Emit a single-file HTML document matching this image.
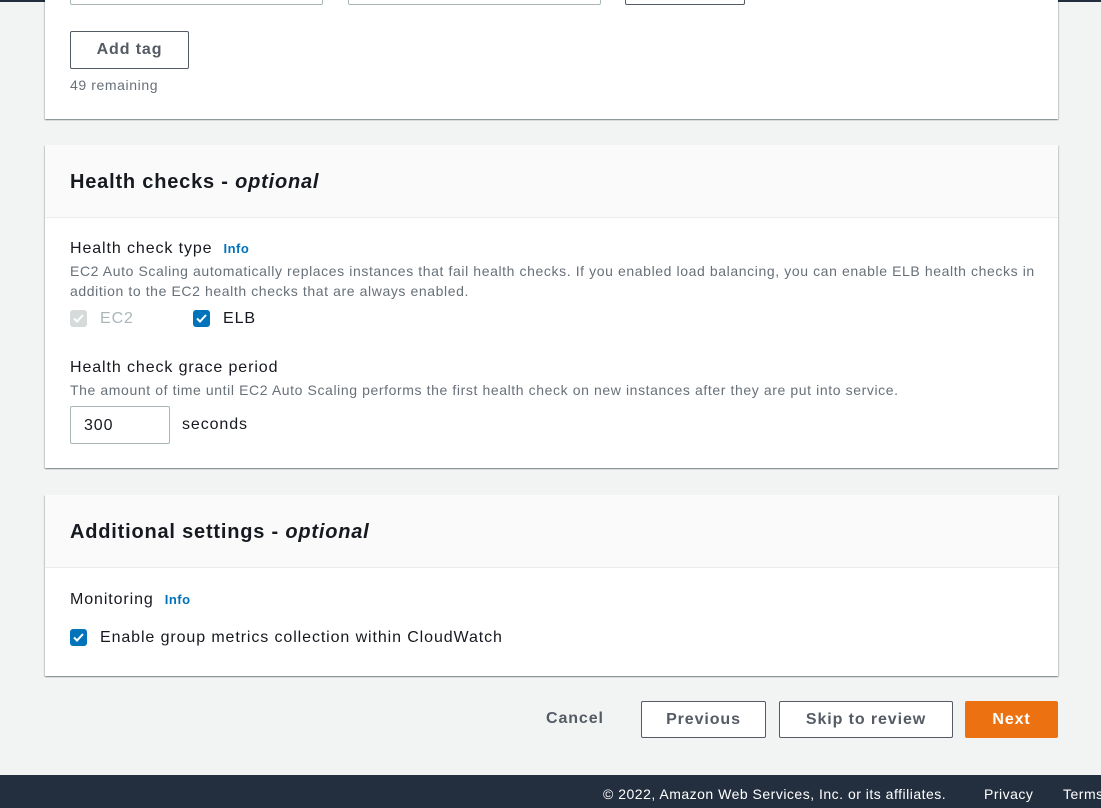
<!DOCTYPE html>
<html><head><meta charset="utf-8"><style>
*{box-sizing:border-box;margin:0;padding:0}
body{width:1101px;height:808px;background:#f2f3f3;font-family:"Liberation Sans",sans-serif;position:relative;overflow:hidden;color:#16191f}
.a{position:absolute;white-space:nowrap}
.card{position:absolute;left:45px;width:1013px;background:#fff;box-shadow:0 1px 1px 0 rgba(0,28,36,.3),1px 1px 1px 0 rgba(0,28,36,.15),-1px 1px 1px 0 rgba(0,28,36,.15)}
.hdr{position:absolute;left:0;top:0;width:100%;height:73px;background:#fafafa;border-bottom:1px solid #eaeded}
.h2{position:absolute;left:25px;font-size:20px;font-weight:bold;letter-spacing:.8px}
.lbl{font-size:16px;letter-spacing:.9px}
.info{color:#0073bb;font-weight:bold;font-size:13px;margin-left:11px;letter-spacing:.5px}
.desc{font-size:14px;color:#687078;line-height:20px;letter-spacing:.6px}
.btn{position:absolute;border:1px solid #545b64;border-radius:2px;background:#fff;color:#545b64;font-weight:bold;font-size:16px;text-align:center;letter-spacing:.9px}
.cb{position:absolute;width:17px;height:17px;border-radius:3px;background:#0073bb}
.cb svg{position:absolute;left:2px;top:2px}
</style></head><body>
<div class="a" style="left:0;top:0;width:1101px;height:2px;background:#232f3e"></div>
<div class="card" style="top:-10px;height:129px">
 <div class="a" style="left:25px;top:0;width:253px;height:15px;border:1px solid #aab7b8;border-top:none;border-radius:0 0 2px 2px"></div>
 <div class="a" style="left:303px;top:0;width:253px;height:15px;border:1px solid #aab7b8;border-top:none;border-radius:0 0 2px 2px"></div>
 <div class="a" style="left:580px;top:0;width:120px;height:15px;border:1px solid #545b64;border-top:none;border-radius:0 0 2px 2px"></div>
 <div class="btn" style="left:25px;top:41px;width:119px;height:38px;line-height:36px;color:#545b64">Add tag</div>
 <div class="a desc" style="left:25px;top:85px">49 remaining</div>
</div>
<div class="card" style="top:145px;height:323px">
 <div class="hdr"></div>
 <div class="h2" style="top:26px">Health checks - <i>optional</i></div>
 <div class="a lbl" style="left:25px;top:95px">Health check type<span class="info">Info</span></div>
 <div class="a desc" style="left:25px;top:116px;width:970px;white-space:normal">EC2 Auto Scaling automatically replaces instances that fail health checks. If you enabled load balancing, you can enable ELB health checks in addition to the EC2 health checks that are always enabled.</div>
 <div class="cb" style="left:25px;top:165px;background:#d5dbdb"><svg width="13" height="13"><path d="M2 6.5l3 3 6-6.5" stroke="#fff" stroke-width="2" fill="none"/></svg></div>
 <div class="a lbl" style="left:55px;top:165px;color:#aab7b8">EC2</div>
 <div class="cb" style="left:148px;top:165px"><svg width="13" height="13"><path d="M2 6.5l3 3 6-6.5" stroke="#fff" stroke-width="2" fill="none"/></svg></div>
 <div class="a lbl" style="left:178px;top:165px">ELB</div>
 <div class="a lbl" style="left:25px;top:214px">Health check grace period</div>
 <div class="a desc" style="left:25px;top:235px">The amount of time until EC2 Auto Scaling performs the first health check on new instances after they are put into service.</div>
 <div class="a" style="left:25px;top:261px;width:100px;height:38px;border:1px solid #aab7b8;border-radius:2px;font-size:16px;padding:10px 13px;letter-spacing:.9px">300</div>
 <div class="a lbl" style="left:137px;top:271px">seconds</div>
</div>
<div class="card" style="top:495px;height:181px">
 <div class="hdr"></div>
 <div class="h2" style="top:26px">Additional settings - <i>optional</i></div>
 <div class="a lbl" style="left:25px;top:96px">Monitoring<span class="info">Info</span></div>
 <div class="cb" style="left:25px;top:134px"><svg width="13" height="13"><path d="M2 6.5l3 3 6-6.5" stroke="#fff" stroke-width="2" fill="none"/></svg></div>
 <div class="a lbl" style="left:55px;top:134px">Enable group metrics collection within CloudWatch</div>
</div>
<div class="a" style="left:546px;top:710px;font-size:16px;font-weight:bold;color:#545b64;letter-spacing:.9px">Cancel</div>
<div class="btn" style="left:641px;top:701px;width:125px;height:37px;line-height:35px">Previous</div>
<div class="btn" style="left:779px;top:701px;width:174px;height:37px;line-height:35px">Skip to review</div>
<div class="btn" style="left:965px;top:701px;width:93px;height:37px;line-height:37px;background:#ec7211;border:none;color:#fff">Next</div>
<div class="a" style="left:0;top:775px;width:1101px;height:33px;background:#232f3e;color:#fff;font-size:14px;letter-spacing:.5px">
 <span class="a" style="left:603px;top:11px">© 2022, Amazon Web Services, Inc. or its affiliates.</span>
 <span class="a" style="left:984px;top:11px">Privacy</span>
 <span class="a" style="left:1063px;top:11px">Terms</span>
</div>
</body></html>
